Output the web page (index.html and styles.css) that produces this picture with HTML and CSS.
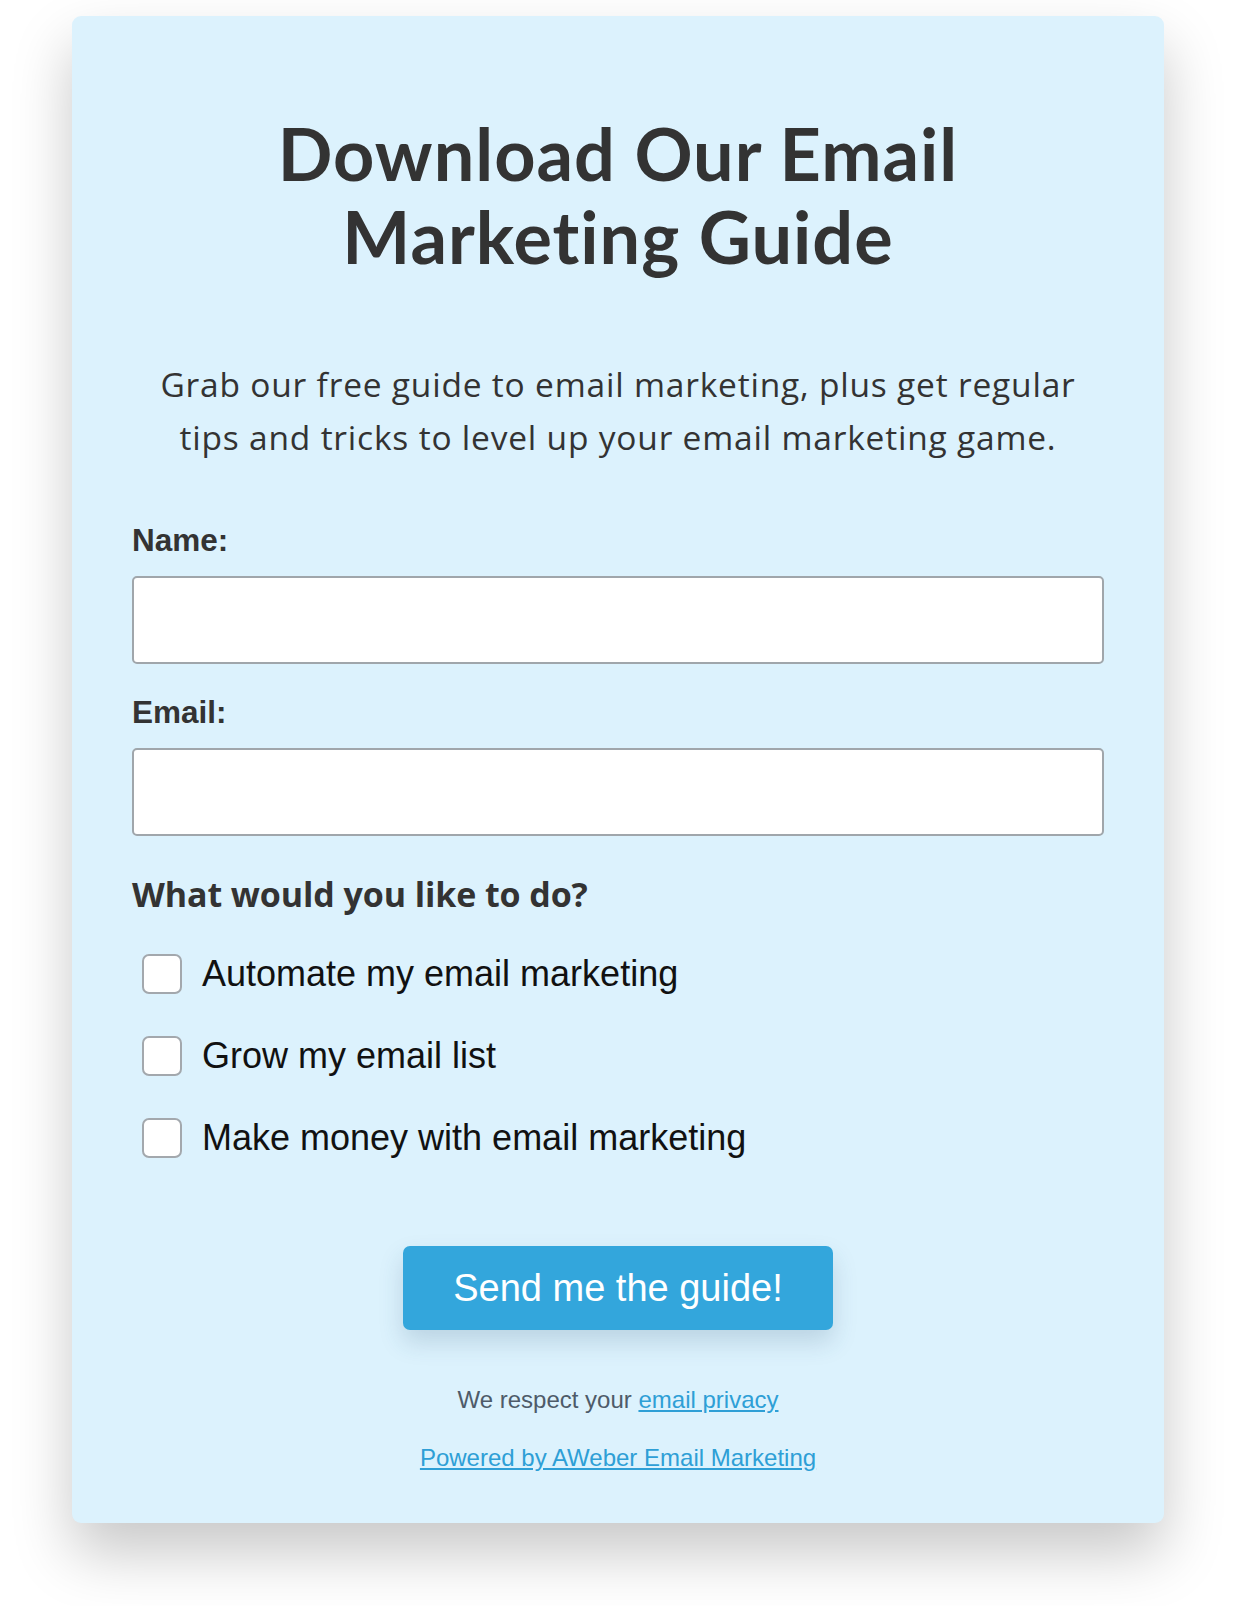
FILE: index.html
```html
<!DOCTYPE html>
<html lang="en">
<head>
<meta charset="utf-8">
<title>Download Our Email Marketing Guide</title>
<link rel="stylesheet" href="styles.css">
</head>
<body>
<div class="card">
  <h1 class="title">Download Our Email<br>Marketing Guide</h1>
  <p class="intro">Grab our free guide to email marketing, plus get regular tips and tricks to level up your email marketing game.</p>
  <form class="form">
    <label class="field-label" for="name">Name:</label>
    <input class="text-input" id="name" type="text">
    <label class="field-label field-label-second" for="email">Email:</label>
    <input class="text-input" id="email" type="email">
    <div class="question">What would you like to do?</div>
    <div class="checks">
      <label class="check"><span class="box"></span><span class="check-text">Automate my email marketing</span></label>
      <label class="check"><span class="box"></span><span class="check-text">Grow my email list</span></label>
      <label class="check"><span class="box"></span><span class="check-text">Make money with email marketing</span></label>
    </div>
    <div class="actions"><button class="submit" type="button">Send me the guide!</button></div>
    <p class="privacy">We respect your <a href="#">email privacy</a></p>
    <p class="powered"><a href="#">Powered by AWeber Email Marketing</a></p>
  </form>
</div>
</body>
</html>
```
FILE: styles.css
```css
html, body {
  margin: 0;
  padding: 0;
  background: #ffffff;
}
body {
  padding: 16px 72px 84px;
}
.card {
  width: 1092px;
  box-sizing: border-box;
  background: #dcf2fd;
  border-radius: 9px;
  padding: 96px 60px 50px;
  box-shadow: 0 30px 60px rgba(0, 0, 0, 0.22);
}
.title {
  margin: 0;
  font-family: Lato, "DejaVu Sans", sans-serif;
  font-weight: 700;
  font-size: 72px;
  line-height: 83px;
  letter-spacing: 1px;
  color: #333333;
  text-align: center;
}
.intro {
  max-width: 950px;
  margin: 80px auto 0;
  font-family: "Open Sans", "DejaVu Sans", sans-serif;
  font-size: 33.5px;
  line-height: 53px;
  letter-spacing: 0.8px;
  color: #333333;
  text-align: center;
}
.form {
  margin: 0;
}
.field-label {
  display: block;
  margin-top: 58px;
  font-family: "Liberation Sans", Arial, sans-serif;
  font-weight: 700;
  font-size: 31.5px;
  line-height: 36px;
  color: #333333;
}
.field-label-second {
  margin-top: 30px;
}
.text-input {
  display: block;
  box-sizing: border-box;
  width: 100%;
  height: 88px;
  margin: 18px 0 0;
  background: #ffffff;
  border: 2px solid #a0a6ab;
  border-radius: 5px;
  font-family: "Liberation Sans", Arial, sans-serif;
  font-size: 30px;
  padding: 0 16px;
}
.question {
  margin-top: 38px;
  font-family: "Open Sans", "DejaVu Sans", sans-serif;
  font-weight: 700;
  font-size: 34px;
  line-height: 40px;
  letter-spacing: -0.1px;
  color: #333333;
}
.checks {
  margin-top: 19px;
}
.check {
  display: flex;
  align-items: center;
  height: 82px;
  padding-left: 10px;
  gap: 20px;
}
.box {
  width: 40px;
  height: 40px;
  box-sizing: border-box;
  background: #ffffff;
  border: 2px solid #a3a8ad;
  border-radius: 7px;
  flex: none;
}
.check-text {
  font-family: "Liberation Sans", Arial, sans-serif;
  font-size: 36px;
  line-height: 40px;
  color: #111111;
}
.actions {
  display: flex;
  justify-content: center;
  margin-top: 67px;
}
.submit {
  width: 430px;
  height: 84px;
  border: none;
  border-radius: 7px;
  background: #33a6dc;
  color: #ffffff;
  font-family: "Liberation Sans", Arial, sans-serif;
  font-size: 38px;
  box-shadow: 0 12px 24px rgba(40, 80, 110, 0.18);
}
.privacy {
  margin: 55px 0 0;
  text-align: center;
  font-family: "Liberation Sans", Arial, sans-serif;
  font-size: 24px;
  line-height: 30px;
  color: #4e5b69;
}
.powered {
  margin: 28px 0 0;
  text-align: center;
  font-family: "Liberation Sans", Arial, sans-serif;
  font-size: 24px;
  line-height: 30px;
}
.privacy a, .powered a {
  color: #2e9fd6;
  text-decoration: underline;
}
```
